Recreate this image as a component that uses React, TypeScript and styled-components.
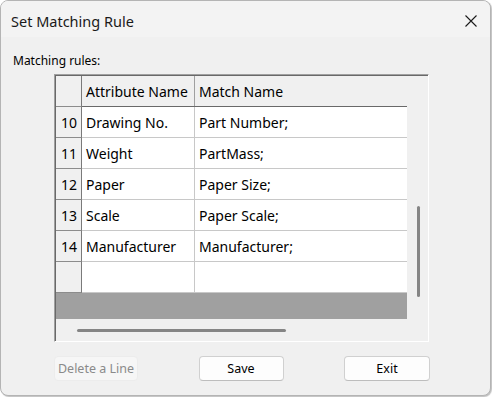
import React from "react";
import styled, { createGlobalStyle } from "styled-components";

const Global = createGlobalStyle`
  html, body { margin: 0; padding: 0; background: #ffffff; }
  body {
    width: 492px; height: 397px; overflow: hidden;
    font-family: "Noto Sans", "Open Sans", sans-serif;
    color: #000;
  }
  * { box-sizing: border-box; }
`;

const Window = styled.div`
  width: 491px;
  height: 396px;
  border: 1px solid #b4b4b4;
  border-radius: 8px;
  overflow: hidden;
  display: flex;
  flex-direction: column;
  background: #f0f0f0;
  box-shadow: 1px 1px 1px rgba(0, 0, 0, 0.25);
`;

const TitleBar = styled.div`
  height: 36px;
  flex: none;
  background: #f3f3f3;
  display: flex;
  align-items: center;
  justify-content: space-between;
  padding: 3px 13px 0 10px;
`;

const Title = styled.span`
  font-size: 14.5px;
  color: #1a1a1a;
`;

const CloseButton = styled.div`
  width: 12px;
  height: 12px;
  display: flex;
`;

const Body = styled.div`
  flex: 1;
  display: flex;
  flex-direction: column;
  padding: 0 0 0 12px;
`;

const Label = styled.div`
  font-size: 12px;
  line-height: 16px;
  height: 16px;
  margin-top: 16px;
  color: #000;
`;

const Frame = styled.div`
  margin-top: 5px;
  margin-left: 41px;
  width: 375px;
  height: 268px;
  border-style: solid;
  border-width: 1px;
  border-color: #a0a0a0 #ffffff #ffffff #a0a0a0;
  display: flex;
  flex-direction: column;
`;

const FrameInner = styled.div`
  flex: 1;
  display: flex;
  flex-direction: column;
  border-top: 1px solid #696969;
  border-left: 1px solid #696969;
`;

const Upper = styled.div`
  flex: 1;
  display: flex;
`;

const TableArea = styled.div`
  width: 351px;
  display: flex;
  flex-direction: column;
`;

const Row = styled.div<{ $header?: boolean }>`
  height: 31px;
  flex: none;
  display: flex;
  border-bottom: 1px solid ${(p) => (p.$header ? "#696969" : "#c8c8c8")};
  background: ${(p) => (p.$header ? "#f0f0f0" : "#ffffff")};
`;

const RowHead = styled.div`
  width: 26px;
  flex: none;
  background: #f0f0f0;
  border-right: 1px solid #7a7a7a;
  margin-bottom: -1px;
  border-bottom: 1px solid #8c8c8c;
  display: flex;
  align-items: center;
  justify-content: center;
  font-size: 14px;
  padding-left: 1px;
`;

const Cell = styled.div<{ $w: number; $sep?: string }>`
  width: ${(p) => p.$w}px;
  flex: none;
  display: flex;
  align-items: center;
  padding-left: 4px;
  font-size: 14px;
  white-space: nowrap;
  border-right: ${(p) => (p.$sep ? `1px solid ${p.$sep}` : "none")};
`;

const Filler = styled.div`
  flex: 1;
  background: #a0a0a0;
`;

const VTrack = styled.div`
  flex: 1;
  background: #f0f0f0;
  display: flex;
  flex-direction: column;
  align-items: center;
  padding-top: 130px;
  padding-left: 1px;
`;

const VThumb = styled.div`
  width: 3px;
  height: 91px;
  border-radius: 2px;
  background: #858585;
`;

const HTrack = styled.div`
  height: 22px;
  flex: none;
  display: flex;
  align-items: center;
  padding-left: 21px;
  background: #f0f0f0;
`;

const HThumb = styled.div`
  width: 209px;
  height: 3px;
  border-radius: 2px;
  background: #858585;
`;

const ButtonRow = styled.div`
  margin-top: 14px;
  margin-left: 41px;
  width: 376px;
  display: flex;
  justify-content: space-between;
`;

const Button = styled.button<{ $w: number }>`
  width: ${(p) => p.$w}px;
  height: 25px;
  border-radius: 4px;
  border: 1px solid #d0d0d0;
  border-bottom-color: #bdbdbd;
  background: #fdfdfd;
  font-family: "Noto Sans", "Open Sans", sans-serif;
  font-size: 12.5px;
  color: #000;
  padding: 0;
  display: flex;
  align-items: center;
  justify-content: center;
  &:disabled {
    background: #f6f6f6;
    border-color: #ececec;
    color: #8a8a8a;
  }
`;

const rows = [
  { n: 10, a: "Drawing No.", m: "Part Number;" },
  { n: 11, a: "Weight", m: "PartMass;" },
  { n: 12, a: "Paper", m: "Paper Size;" },
  { n: 13, a: "Scale", m: "Paper Scale;" },
  { n: 14, a: "Manufacturer", m: "Manufacturer;" },
  { n: "", a: "", m: "" },
];

export default function App() {
  return (
    <>
      <Global />
      <Window>
        <TitleBar>
          <Title>Set Matching Rule</Title>
          <CloseButton>
            <svg width="12" height="12" viewBox="0 0 12 12">
              <path d="M0.5 0.5 L11.5 11.5 M11.5 0.5 L0.5 11.5" stroke="#1a1a1a" strokeWidth="1.1" fill="none" />
            </svg>
          </CloseButton>
        </TitleBar>
        <Body>
          <Label>Matching rules:</Label>
          <Frame>
            <FrameInner>
              <Upper>
                <TableArea>
                  <Row $header>
                    <RowHead />
                    <Cell $w={113} $sep="#a0a0a0">Attribute Name</Cell>
                    <Cell $w={212}>Match Name</Cell>
                  </Row>
                  {rows.map((r, i) => (
                    <Row key={i}>
                      <RowHead>{r.n}</RowHead>
                      <Cell $w={113} $sep="#c8c8c8">{r.a}</Cell>
                      <Cell $w={212}>{r.m}</Cell>
                    </Row>
                  ))}
                  <Filler />
                </TableArea>
                <VTrack>
                  <VThumb />
                </VTrack>
              </Upper>
              <HTrack>
                <HThumb />
              </HTrack>
            </FrameInner>
          </Frame>
          <ButtonRow>
            <Button $w={84} disabled>Delete a Line</Button>
            <Button $w={85}>Save</Button>
            <Button $w={86}>Exit</Button>
          </ButtonRow>
        </Body>
      </Window>
    </>
  );
}
